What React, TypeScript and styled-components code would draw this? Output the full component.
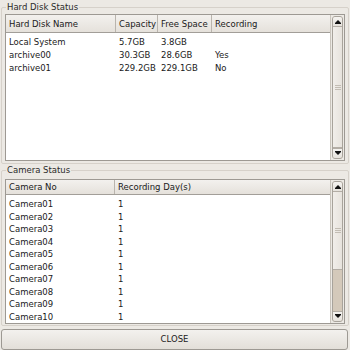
import React from "react";
import styled, { createGlobalStyle } from "styled-components";

const Global = createGlobalStyle`
  html, body { margin: 0; padding: 0; background: #ece9e4; }
  * { box-sizing: border-box; }
`;

const Window = styled.div`
  width: 350px;
  height: 350px;
  background: #ece9e4;
  font-family: "DejaVu Sans", "Liberation Sans", sans-serif;
  font-size: 8.5px;
  color: #1a1a1a;
  display: flex;
  flex-direction: column;
  padding: 1px 1px 0 1px;
  overflow: hidden;
`;

const Group = styled.fieldset<{ $h: number }>`
  margin: 0;
  padding: 0 3px 0 3px;
  height: ${(p) => p.$h}px;
  border: 1px solid #d6d1ca;
  border-radius: 2px;
  min-width: 0;
  display: flex;
  flex-direction: column;
`;

const Legend = styled.legend`
  padding: 0 1px;
  margin-left: 1px;
  line-height: 12px;
  height: 12px;
  font-size: 8.5px;
  color: #2a2a2a;
`;

const ListBox = styled.div<{ $top: number; $h: number }>`
  margin-top: ${(p) => p.$top}px;
  height: ${(p) => p.$h}px;
  display: flex;
  border: 1px solid #9d9993;
  background: #ffffff;
`;

const ListArea = styled.div`
  flex: 1;
  display: flex;
  flex-direction: column;
  min-width: 0;
`;

const HeaderRow = styled.div<{ $cols: string }>`
  display: grid;
  grid-template-columns: ${(p) => p.$cols};
  height: 18px;
  background: linear-gradient(#f3f1ee, #e5e1db);
  border-bottom: 1px solid #a29e98;
`;

const HeaderCell = styled.div`
  display: flex;
  align-items: center;
  padding-left: 3px;
  border-right: 1px solid #b9b4ad;
  white-space: nowrap;
  overflow: hidden;
  color: #1a1a1a;
  &:last-child { border-right: none; }
`;

const Body = styled.div<{ $pt: number }>`
  padding-top: ${(p) => p.$pt}px;
  flex: 1;
`;

const Row = styled.div<{ $cols: string; $h: number }>`
  display: grid;
  grid-template-columns: ${(p) => p.$cols};
  height: ${(p) => p.$h}px;
  line-height: ${(p) => p.$h}px;
`;

const Cell = styled.div`
  padding-left: 3px;
  white-space: nowrap;
  overflow: hidden;
`;

const ScrollBar = styled.div`
  width: 14px;
  display: flex;
  flex-direction: column;
  background: #ece9e4;
  border-left: 1px solid #c9c4bc;
  padding: 1px 1px 1px 1px;
`;

const Track = styled.div`
  flex: 1;
  display: flex;
  flex-direction: column;
  border: 1px solid #a8a39b;
  border-radius: 3px;
  overflow: hidden;
  background: #d4c9ba;
`;

const ArrowBtn = styled.div`
  height: 10px;
  display: flex;
  align-items: center;
  justify-content: center;
  background: linear-gradient(#f5f3f0, #e6e2dc);
  flex: none;
  &:first-child { border-bottom: 1px solid #b3ada5; }
  &:last-child { border-top: 1px solid #b3ada5; }
`;

const Thumb = styled.div<{ $h?: number }>`
  ${(p) => (p.$h ? `height: ${p.$h}px; flex: none;` : "flex: 1;")}
  background: linear-gradient(90deg, #f1eeea, #e7e3dd);
  border-bottom: 1px solid #b3ada5;
  display: flex;
  align-items: center;
  justify-content: center;
`;

const Grip = styled.div`
  width: 6px;
  height: 5px;
  background: repeating-linear-gradient(#c2bcb3 0 1px, transparent 1px 2px);
`;

const Spacer = styled.div`
  flex: 1;
`;

const CloseButton = styled.button`
  margin: 3px 1px 0 0;
  height: 21px;
  flex: none;
  border: 1px solid #9d9993;
  border-radius: 3px;
  background: linear-gradient(#f3f1ee, #e3dfd9);
  font-family: inherit;
  font-size: 8.5px;
  color: #1a1a1a;
  padding: 0 0 1px 0;
`;

const Arrow = ({ up }: { up?: boolean }) => (
  <svg width="6" height="5" viewBox="0 0 6 5">
    {up ? (
      <>
        <path d="M3 1 L6 4 L0 4 Z" fill="#111" />
        <rect x="0" y="4" width="6" height="1" fill="#111" />
      </>
    ) : (
      <>
        <rect x="0" y="0" width="6" height="1" fill="#111" />
        <path d="M0 1 L6 1 L3 4 Z" fill="#111" />
      </>
    )}
  </svg>
);

const Scroller = ({ thumb }: { thumb?: number }) => (
  <ScrollBar>
    <Track>
      <ArrowBtn>
        <Arrow up />
      </ArrowBtn>
      <Thumb $h={thumb}>
        <Grip />
      </Thumb>
      {thumb ? <Spacer /> : null}
      <ArrowBtn>
        <Arrow />
      </ArrowBtn>
    </Track>
  </ScrollBar>
);

const diskCols = "110px 42px 54px 1fr";
const camCols = "109px 1fr";

const disks = [
  ["Local System", "5.7GB", "3.8GB", ""],
  ["archive00", "30.3GB", "28.6GB", "Yes"],
  ["archive01", "229.2GB", "229.1GB", "No"],
];

const cameras = Array.from({ length: 10 }, (_, i) => `Camera${String(i + 1).padStart(2, "0")}`);

export default function App() {
  return (
    <>
      <Global />
      <Window>
        <Group $h={164}>
          <Legend>Hard Disk Status</Legend>
          <ListBox $top={1} $h={147}>
            <ListArea>
              <HeaderRow $cols={diskCols}>
                <HeaderCell>Hard Disk Name</HeaderCell>
                <HeaderCell>Capacity</HeaderCell>
                <HeaderCell>Free Space</HeaderCell>
                <HeaderCell>Recording</HeaderCell>
              </HeaderRow>
              <Body $pt={3}>
                {disks.map((d) => (
                  <Row key={d[0]} $cols={diskCols} $h={13}>
                    {d.map((c, i) => (
                      <Cell key={i}>{c}</Cell>
                    ))}
                  </Row>
                ))}
              </Body>
            </ListArea>
            <Scroller />
          </ListBox>
        </Group>
        <Group $h={163}>
          <Legend>Camera Status</Legend>
          <ListBox $top={3} $h={145}>
            <ListArea>
              <HeaderRow $cols={camCols}>
                <HeaderCell>Camera No</HeaderCell>
                <HeaderCell>Recording Day(s)</HeaderCell>
              </HeaderRow>
              <Body $pt={3}>
                {cameras.map((c) => (
                  <Row key={c} $cols={camCols} $h={12.5}>
                    <Cell>{c}</Cell>
                    <Cell>1</Cell>
                  </Row>
                ))}
              </Body>
            </ListArea>
            <Scroller thumb={78} />
          </ListBox>
        </Group>
        <CloseButton>CLOSE</CloseButton>
      </Window>
    </>
  );
}
